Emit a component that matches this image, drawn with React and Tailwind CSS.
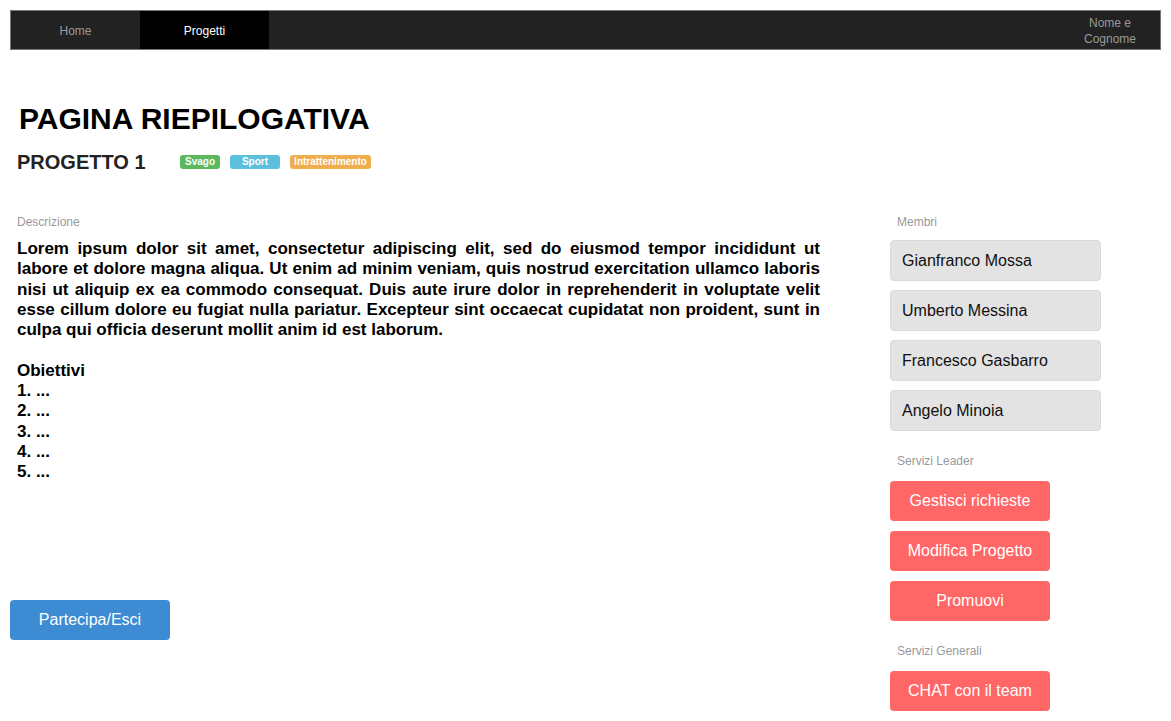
import React from 'react'

const MEMBERS = ['Gianfranco Mossa', 'Umberto Messina', 'Francesco Gasbarro', 'Angelo Minoia']
const LEADER = ['Gestisci richieste', 'Modifica Progetto', 'Promuovi']

const TAGS = [
  { label: 'Svago', cls: 'w-[40px] bg-[#5cb85c]' },
  { label: 'Sport', cls: 'w-[50px] bg-[#5bc0de]' },
  { label: 'Intrattenimento', cls: 'w-[81px] bg-[#f0ad4e]' },
]

function RedButton({ children, className = '' }) {
  return (
    <button className={`w-[160px] h-[40px] rounded-[4px] bg-[#ff6666] text-white text-[16px] ${className}`}>
      {children}
    </button>
  )
}

export default function App() {
  return (
    <div className="w-full h-[721px] bg-white px-[10px] pt-[10px] font-['Liberation_Sans',Arial,sans-serif] overflow-hidden">
      {/* Navbar */}
      <nav className="h-[40px] flex bg-[#222] border border-[#777] text-[12px]">
        <div className="w-[129px] flex items-center justify-center pt-[1px] text-[#999]">Home</div>
        <div className="w-[129px] flex items-center justify-center pt-[1px] bg-black text-white">Progetti</div>
        <div className="flex-1" />
        <div className="w-[100px] flex items-center justify-center text-center leading-[16px] pt-[1px] text-[#999]">
          Nome e<br />Cognome
        </div>
      </nav>

      {/* Header */}
      <h1 className="mt-[52px] pl-[9px] text-[30px] leading-[34px] font-bold text-black">PAGINA RIEPILOGATIVA</h1>
      <div className="mt-[14px] pl-[7px] flex items-center h-[24px]">
        <h2 className="text-[20px] font-bold text-[#222] w-[163px]">PROGETTO 1</h2>
        <div className="flex gap-[10px]">
          {TAGS.map(t => (
            <span
              key={t.label}
              className={`h-[14px] rounded-[3px] text-white text-[10px] font-bold leading-[14px] text-center ${t.cls}`}
            >
              {t.label}
            </span>
          ))}
        </div>
      </div>

      {/* Body */}
      <div className="mt-[40px] flex gap-[70px]">
        {/* Left column */}
        <div className="w-[810px] flex flex-col">
          <div className="pl-[7px] text-[12px] leading-[16px] text-[#999]">Descrizione</div>
          <div className="mt-[9px] pl-[7px] text-[17px] leading-[20.3px] font-bold text-black">
            <p className="text-justify">
              Lorem ipsum dolor sit amet, consectetur adipiscing elit, sed do eiusmod tempor incididunt ut labore et
              dolore magna aliqua. Ut enim ad minim veniam, quis nostrud exercitation ullamco laboris nisi ut aliquip ex
              ea commodo consequat. Duis aute irure dolor in reprehenderit in voluptate velit esse cillum dolore eu
              fugiat nulla pariatur. Excepteur sint occaecat cupidatat non proident, sunt in culpa qui officia deserunt
              mollit anim id est laborum.
            </p>
            <p className="mt-[20.3px]">Obiettivi</p>
            <p>1. ...</p>
            <p>2. ...</p>
            <p>3. ...</p>
            <p>4. ...</p>
            <p>5. ...</p>
          </div>
          <button className="mt-[117px] w-[160px] h-[40px] rounded-[4px] bg-[#3d8bd2] text-white text-[16px]">
            Partecipa/Esci
          </button>
        </div>

        {/* Right column */}
        <div className="w-[211px] flex flex-col">
          <div className="pl-[7px] text-[12px] leading-[16px] text-[#999]">Membri</div>
          <div className="mt-[10px] flex flex-col gap-[9px]">
            {MEMBERS.map(m => (
              <div
                key={m}
                className="h-[41px] flex items-center px-[11px] rounded-[4px] bg-[#e3e3e3] border border-[#dadada] text-[16px] text-[#111]"
              >
                {m}
              </div>
            ))}
          </div>

          <div className="mt-[22px] pl-[7px] text-[12px] leading-[16px] text-[#999]">Servizi Leader</div>
          <div className="mt-[12px] flex flex-col gap-[10px]">
            {LEADER.map(l => (
              <RedButton key={l}>{l}</RedButton>
            ))}
          </div>

          <div className="mt-[22px] pl-[7px] text-[12px] leading-[16px] text-[#999]">Servizi Generali</div>
          <RedButton className="mt-[12px]">CHAT con il team</RedButton>
        </div>
      </div>
    </div>
  )
}
